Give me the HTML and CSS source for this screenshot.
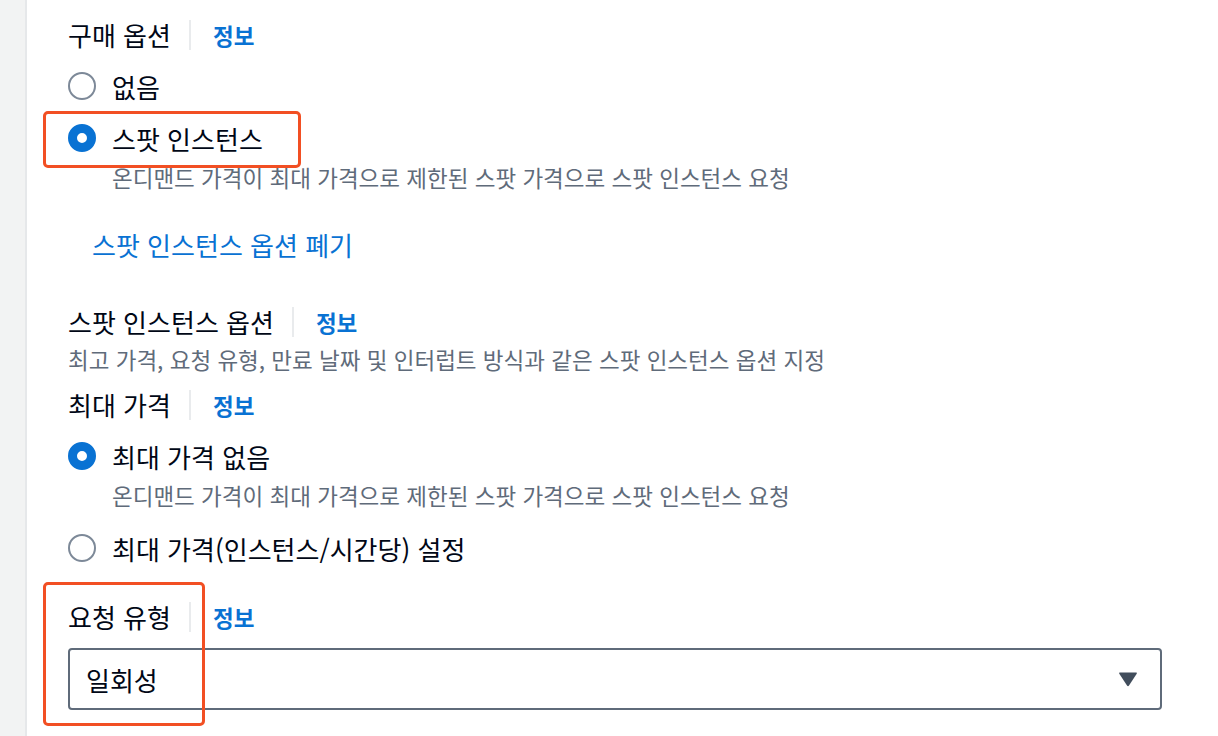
FILE: index.html
```html
<!DOCTYPE html>
<html lang="ko">
<head>
    <meta charset="UTF-8">
    <title>구매 옵션</title>
    <link rel="stylesheet" href="styles.css">
</head>
<body>
    <div class="page">
        <div class="rail"></div>
        <div class="content">
            <div class="field-label">
                <span class="label-text">구매 옵션</span>
                <a class="info" href="#">정보</a>
            </div>
            <div class="radio-group first">
                <div class="radio">
                    <span class="dot"></span>
                    <span class="radio-text">없음</span>
                </div>
                <div class="radio marked">
                    <span class="dot checked"></span>
                    <span class="radio-text">스팟 인스턴스</span>
                    <span class="mark mark-spot"></span>
                </div>
                <div class="radio-desc">온디맨드 가격이 최대 가격으로 제한된 스팟 가격으로 스팟 인스턴스 요청</div>
            </div>

            <a class="dismiss" href="#">스팟 인스턴스 옵션 폐기</a>

            <div class="field-label section">
                <span class="label-text">스팟 인스턴스 옵션</span>
                <a class="info" href="#">정보</a>
            </div>
            <div class="section-desc">최고 가격, 요청 유형, 만료 날짜 및 인터럽트 방식과 같은 스팟 인스턴스 옵션 지정</div>

            <div class="field-label price">
                <span class="label-text">최대 가격</span>
                <a class="info" href="#">정보</a>
            </div>
            <div class="radio-group">
                <div class="radio">
                    <span class="dot checked"></span>
                    <span class="radio-text">최대 가격 없음</span>
                </div>
                <div class="radio-desc">온디맨드 가격이 최대 가격으로 제한된 스팟 가격으로 스팟 인스턴스 요청</div>
                <div class="radio last">
                    <span class="dot"></span>
                    <span class="radio-text">최대 가격(인스턴스/시간당) 설정</span>
                </div>
            </div>

            <div class="request-field">
                <span class="mark mark-request"></span>
                <div class="field-label">
                    <span class="label-text">요청 유형</span>
                    <a class="info" href="#">정보</a>
                </div>
                <div class="select">
                    <span>일회성</span>
                    <svg class="caret" width="20" height="16" viewBox="0 0 20 16">
                        <path d="M2 1.5 H18 Q19.5 1.5 18.7 2.8 L11 14.5 Q10 15.8 9 14.5 L1.3 2.8 Q0.5 1.5 2 1.5 Z" fill="#414d5c"/>
                    </svg>
                </div>
            </div>
        </div>
    </div>
</body>
</html>
```

FILE: styles.css
```css
body {
  margin: 0;
  background-color: #fff;
  color: #000716;
  font-family: "Noto Sans CJK KR", "Noto Sans", sans-serif;
}
a {
  text-decoration: none;
}
.page {
  display: flex;
  min-height: 736px;
}
.rail {
  width: 25px;
  background-color: #f2f3f3;
  border-right: 2px solid #e6e8ea;
  flex-shrink: 0;
}
.content {
  flex: 1;
  padding: 18px 56px 0 41px;
  display: flex;
  flex-direction: column;
  align-items: flex-start;
}
.field-label {
  display: flex;
  align-items: center;
  height: 34px;
  font-size: 26px;
}
.label-text {
  padding-right: 18px;
  border-right: 2px solid #e9ebed;
  line-height: 30px;
}
.info {
  color: #0972d3;
  font-weight: 700;
  font-size: 22.5px;
  padding-left: 22px;
}
.radio-group {
  display: flex;
  flex-direction: column;
  align-items: flex-start;
  margin-top: 17px;
}
.radio {
  position: relative;
  display: flex;
  align-items: center;
  height: 34px;
  font-size: 26px;
}
.radio + .radio {
  margin-top: 18px;
}
.radio.last {
  margin-top: 22px;
}
.dot {
  box-sizing: border-box;
  width: 28px;
  height: 28px;
  border: 2px solid #7d8998;
  border-radius: 50%;
  margin-right: 16px;
  background: #fff;
}
.dot.checked {
  border: 9px solid #0972d3;
}
.radio-desc {
  padding-left: 44px;
  margin-top: 8px;
  font-size: 22.5px;
  line-height: 28px;
  color: #5f6b7a;
}
.dismiss {
  margin-top: 37px;
  margin-left: 24px;
  font-size: 26px;
  line-height: 34px;
  color: #0972d3;
}
.field-label.section {
  margin-top: 43px;
}
.section-desc {
  margin-top: 6px;
  font-size: 22.5px;
  line-height: 28px;
  color: #5f6b7a;
}
.field-label.price {
  margin-top: 15px;
}
.request-field {
  position: relative;
  align-self: stretch;
  margin-top: 35px;
}
.select {
  box-sizing: border-box;
  margin-top: 14px;
  height: 62px;
  border: 2px solid #5f6b7a;
  border-radius: 4px;
  display: flex;
  align-items: center;
  justify-content: space-between;
  padding: 0 22px 0 16px;
  font-size: 26px;
}
.mark {
  position: absolute;
  border: 3px solid #f24f23;
  border-radius: 5px;
  pointer-events: none;
}
.mark-spot {
  left: -25px;
  top: -10px;
  width: 252px;
  height: 51px;
}
.mark-request {
  left: -25px;
  top: -18px;
  width: 156px;
  height: 138px;
}
```
